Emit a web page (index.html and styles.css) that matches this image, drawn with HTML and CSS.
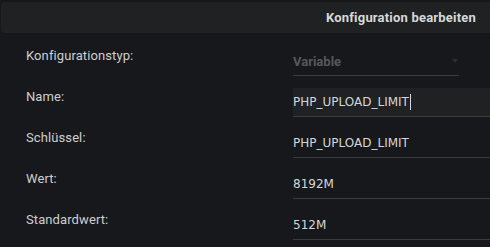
FILE: index.html
```html
<!DOCTYPE html>
<html lang="de">
<head>
    <meta charset="UTF-8">
    <title>Konfiguration bearbeiten</title>
    <link rel="stylesheet" href="styles.css">
</head>
<body>
    <div class="header">Konfiguration bearbeiten</div>

    <form class="form">
        <label class="label">Konfigurationstyp:</label>
        <div class="field select">
            <span class="select-value">Variable</span>
            <span class="arrow"></span>
        </div>

        <label class="label">Name:</label>
        <div class="field active">PHP_UPLOAD_LIMIT<span class="caret"></span></div>

        <label class="label">Schlüssel:</label>
        <div class="field">PHP_UPLOAD_LIMIT</div>

        <label class="label">Wert:</label>
        <div class="field">8192M</div>

        <label class="label">Standardwert:</label>
        <div class="field">512M</div>
    </form>
</body>
</html>
```

FILE: styles.css
```css
* {
    margin: 0;
    padding: 0;
    box-sizing: border-box;
}

body {
    background-color: #17181b;
    font-family: 'Roboto', 'Liberation Sans', sans-serif;
    color: #cfd1d3;
    overflow: hidden;
}

/* Header bar */
.header {
    margin: 2px 0 0 1px;
    height: 31px;
    padding-right: 14px;
    background-color: #1f2123;
    border-radius: 4px 0 0 4px;
    text-align: right;
    font-size: 13px;
    font-weight: bold;
    letter-spacing: 0.2px;
    line-height: 31px;
    color: #d6d8da;
}

/* Form grid */
.form {
    display: grid;
    grid-template-columns: 267px 1fr;
    row-gap: 12px;
    padding-left: 26px;
    margin-top: 14px;
}

.label {
    font-size: 13px;
    line-height: 16px;
    padding-top: 1px;
    letter-spacing: 0.1px;
    color: #cdcfd1;
}

.field {
    height: 29px;
    display: flex;
    align-items: center;
    border-bottom: 1px solid #3a3c3f;
    font-family: 'DejaVu Sans', sans-serif;
    font-size: 12px;
    color: #d4d6d8;
}

.field.active {
    background-color: #1f2123;
}

.caret {
    display: inline-block;
    width: 1px;
    height: 16px;
    background-color: #d4d6d8;
    margin-left: 1px;
}

.select {
    width: 166px;
    justify-content: space-between;
}

.select-value {
    font-family: 'Roboto', sans-serif;
    font-size: 13px;
    font-weight: bold;
    color: #55585b;
}

.arrow {
    width: 0;
    height: 0;
    border-left: 3px solid transparent;
    border-right: 3px solid transparent;
    border-top: 4px solid #2c2e31;
    margin-right: 1px;
}
```
